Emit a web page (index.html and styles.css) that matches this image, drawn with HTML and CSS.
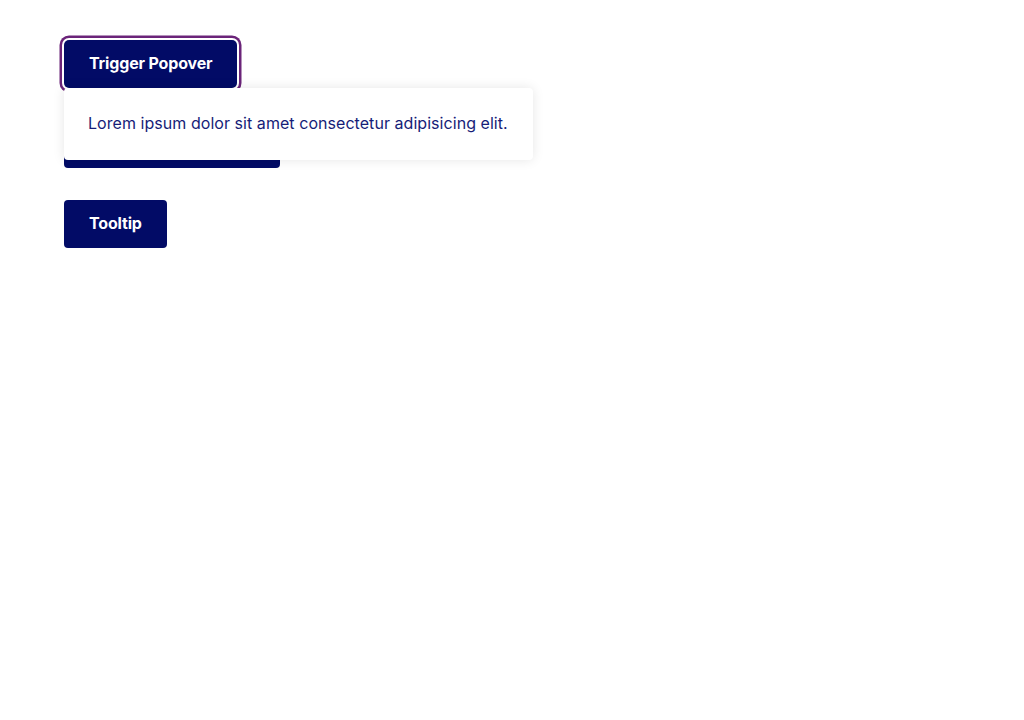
FILE: index.html
```html
<!DOCTYPE html>
<html lang="en">
<head>
<meta charset="utf-8">
<title>Popover</title>
<link rel="stylesheet" href="styles.css">
</head>
<body>
<main class="page">
  <div class="anchor">
    <button class="btn btn--focus">Trigger Popover</button>
    <div class="popover">Lorem ipsum dolor sit amet consectetur adipisicing elit.</div>
  </div>
  <button class="btn">Popover Without Title</button>
  <button class="btn">Tooltip</button>
</main>
</body>
</html>
```
FILE: styles.css
```css
html, body {
  margin: 0;
  background: #ffffff;
}
body {
  font-family: Inter, "Noto Sans", sans-serif;
}
.page {
  padding: 40px 64px;
  display: flex;
  flex-direction: column;
  align-items: flex-start;
  gap: 32px;
}
.anchor {
  position: relative;
}
.btn {
  height: 48px;
  padding: 0 25px 2px;
  border: none;
  border-radius: 4px;
  background: #020b66;
  color: #ffffff;
  font-family: Inter, "Noto Sans", sans-serif;
  font-weight: 700;
  font-size: 16px;
  letter-spacing: -0.16px;
  cursor: pointer;
}
.btn--focus {
  box-shadow: 0 0 0 2px #ffffff, 0 0 0 4.5px #6b2479;
  border-radius: 5px;
}
.popover {
  position: absolute;
  top: 48px;
  left: 0;
  z-index: 2;
  background: #ffffff;
  border-radius: 4px;
  padding: 23px 25px 25px 24px;
  color: #161d78;
  font-size: 16px;
  line-height: 24px;
  letter-spacing: 0.05px;
  white-space: nowrap;
  box-shadow: 0 0 12px rgba(0, 0, 0, 0.1);
}
```
